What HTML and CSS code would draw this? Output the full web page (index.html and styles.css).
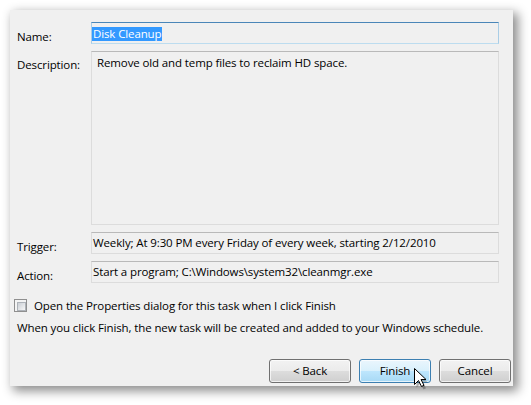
FILE: index.html
```html
<!DOCTYPE html>
<html>
<head>
<meta charset="utf-8">
<link rel="stylesheet" href="styles.css">
</head>
<body>
<div class="panel">
  <div class="row">
    <div class="label">Name:</div>
    <div class="field focus"><span class="sel">Disk Cleanup</span></div>
  </div>
  <div class="row desc-row">
    <div class="label">Description:</div>
    <div class="field area">Remove old and temp files to reclaim HD space.</div>
  </div>
  <div class="row">
    <div class="label">Trigger:</div>
    <div class="field">Weekly; At 9:30 PM every Friday of every week, starting 2/12/2010</div>
  </div>
  <div class="row">
    <div class="label">Action:</div>
    <div class="field">Start a program; C:\Windows\system32\cleanmgr.exe</div>
  </div>
  <label class="check-row">
    <span class="checkbox"><span class="check-inner"></span></span>
    <span>Open the Properties dialog for this task when I click Finish</span>
  </label>
  <div class="info">When you click Finish, the new task will be created and added to your Windows schedule.</div>
  <div class="buttons">
    <div class="btn back">&lt; Back</div>
    <div class="btn hover">Finish</div>
    <div class="btn">Cancel</div>
    <svg class="cursor" width="14" height="22" viewBox="0 0 14 22">
      <path d="M1.5 2.5 L1.5 18.5 L5.5 14.5 L8.5 20.5 L11 19.3 L8 13.5 L13 13.5 Z" fill="rgba(0,0,0,0.25)" transform="translate(1,1)"/>
      <path d="M0.5 0.5 L0.5 16.5 L4.5 12.5 L7.5 18.5 L10 17.3 L7 11.5 L12 11.5 Z" fill="#fff" stroke="#000" stroke-width="1" stroke-linejoin="miter"/>
    </svg>
  </div>
</div>
</body>
</html>
```
FILE: styles.css
```css
html, body {
  margin: 0;
  padding: 0;
  background: #ffffff;
}
body {
  font-family: "Open Sans", "Noto Sans", sans-serif;
  font-size: 11.5px;
  letter-spacing: -0.12px;
  line-height: 15px;
  color: #000;
  width: 531px;
  height: 405px;
  overflow: hidden;
}
.panel {
  margin: 10px;
  width: 503px;
  height: 376px;
  box-sizing: border-box;
  background: #f0f0f0;
  box-shadow: 4px 4px 10px 1px rgba(0, 0, 0, 0.45);
  padding: 12px 14px 0 7px;
  display: flex;
  flex-direction: column;
  position: relative;
}
.row {
  display: flex;
  height: 22px;
  margin-bottom: 7px;
}
.desc-row {
  height: 174px;
}
.label {
  width: 74px;
  flex: none;
  padding-top: 7px;
}
.desc-row .label {
  padding-top: 6px;
}
.field {
  flex: 1;
  box-sizing: border-box;
  border: 1px solid #dcdcdc;
  border-top-color: #b9b9b9;
  padding: 2px 1px;
  white-space: nowrap;
  overflow: hidden;
}
.field.focus {
  border-color: #a9cde6;
  border-top-color: #4a86b8;
  border-bottom-color: #bcdcef;
  padding: 3px 0 0 0;
}
.sel {
  display: inline-block;
  background: #3399ff;
  color: #fff;
  height: 14px;
  line-height: 14px;
  padding: 0 1px;
}
.field.area {
  padding: 3px 5px;
  white-space: normal;
}
.check-row {
  display: flex;
  align-items: center;
  margin: 8px 0 0 -3px;
  height: 15px;
  gap: 7px;
}
.checkbox {
  width: 13px;
  height: 13px;
  box-sizing: border-box;
  border: 1px solid #8f8f8f;
  background: #f4f4f4;
  padding: 2px;
  flex: none;
}
.check-inner {
  display: block;
  width: 7px;
  height: 7px;
  border: 1px solid #aeb3b9;
  background: linear-gradient(135deg, #cbcfd5, #f7f7f7);
}
.info {
  margin-top: 7px;
  height: 15px;
  white-space: nowrap;
}
.buttons {
  display: flex;
  justify-content: flex-end;
  gap: 8px;
  margin-top: 24px;
  margin-right: -12px;
  position: relative;
}
.btn {
  width: 72px;
  height: 24px;
  box-sizing: border-box;
  border: 1px solid #707070;
  border-radius: 3px;
  background: linear-gradient(#f2f2f2 0%, #ebebeb 50%, #dddddd 50%, #cfcfcf 100%);
  box-shadow: inset 0 0 0 1px rgba(255, 255, 255, 0.7);
  text-align: center;
  line-height: 21px;
}
.btn.back {
  width: 82px;
}
.btn.hover {
  border-color: #3c7fb1;
  background: linear-gradient(#eaf6fd 0%, #d9f0fc 50%, #bee6fd 50%, #a7d9f5 100%);
}
.cursor {
  position: absolute;
  left: 397px;
  top: 9px;
}
```
